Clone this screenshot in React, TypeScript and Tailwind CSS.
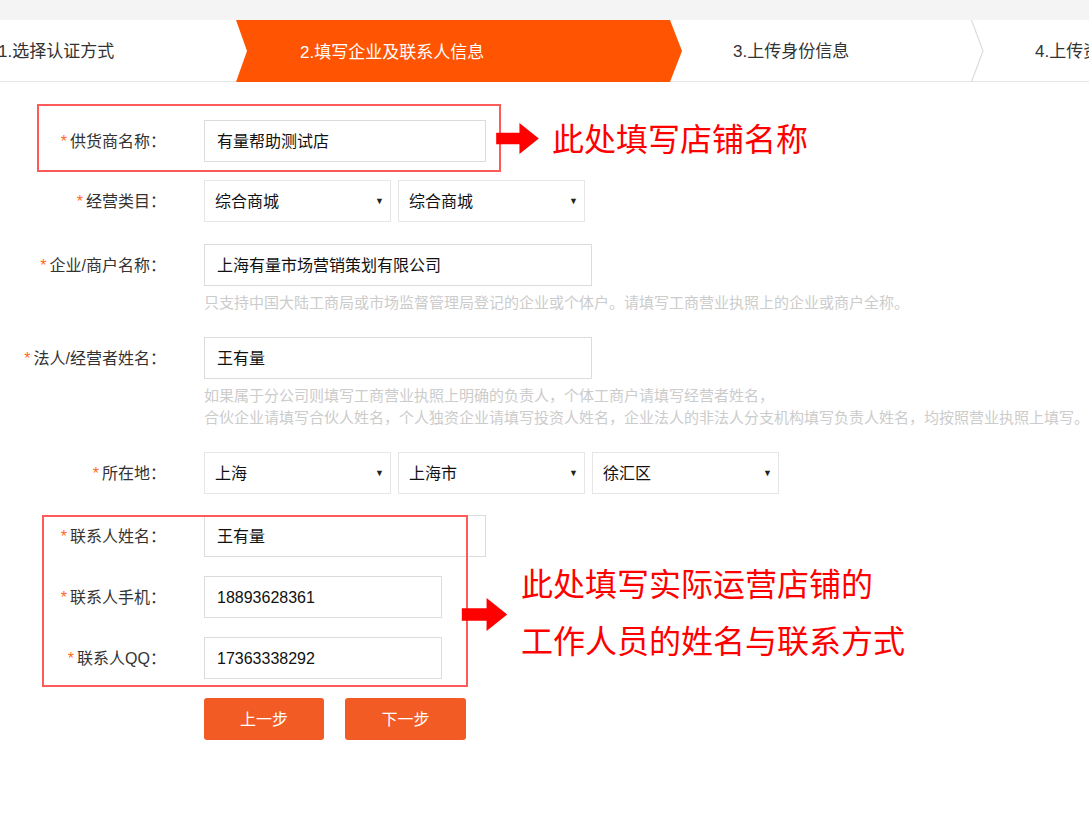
import React from 'react';

const Label: React.FC<{ text: string }> = ({ text }) => (
  <div className="w-[166px] h-[42px] shrink-0 flex items-center justify-end pt-[2px] text-[16px] text-[#333] whitespace-nowrap">
    <span className="text-[#ff6a1a] mr-[3px] text-[16px]">*</span>
    {text}：
  </div>
);

const Input: React.FC<{ value: string; w: string }> = ({ value, w }) => (
  <div className={`${w} h-[42px] border border-[#dcdcdc] bg-white flex items-center pl-[12px] pt-[2px] text-[16px] text-[#111]`}>
    {value}
  </div>
);

const Select: React.FC<{ value: string }> = ({ value }) => (
  <div className="w-[187px] h-[42px] border border-[#e6e6e6] bg-white flex items-center justify-between pl-[10px] pr-[6px] pt-[2px] text-[16px] text-[#111]">
    <span>{value}</span>
    <span className="text-[9px] text-[#222]">▼</span>
  </div>
);

const Arrow: React.FC<{ className: string }> = ({ className }) => (
  <svg className={className} viewBox="0 0 44 32" fill="#ff0000">
    <polygon points="0,10 24,10 24,0 44,16 24,32 24,22 0,22" />
  </svg>
);

export default function App() {
  return (
    <div className="relative w-[1089px] h-[815px] bg-white overflow-hidden font-['Liberation_Sans','Noto_Sans_CJK_SC',sans-serif]">
      <div className="h-[20px] bg-[#f4f4f4]" />

      {/* steps */}
      <div className="flex h-[62px] text-[17px] whitespace-nowrap">
        <div className="w-[236px] shrink-0 flex items-center pt-[3px] border-b border-[#e6e6e6] text-[#333]">
          <span className="-ml-[2px]">1.选择认证方式</span>
        </div>
        <div className="relative z-10 w-[446px] shrink-0 flex items-center pl-[64px] pt-[3px] bg-[#ff5503] text-white [clip-path:polygon(0_0,434px_0,446px_50%,434px_100%,0_100%,11px_50%)]">
          2.填写企业及联系人信息
        </div>
        <div className="relative -ml-[12px] w-[314px] shrink-0 flex items-center pl-[63px] pt-[3px] border-b border-[#e6e6e6] text-[#333]">
          3.上传身份信息
          <svg className="absolute right-0 top-0 w-[13px] h-[62px]" viewBox="0 0 13 62">
            <polyline points="0.5,0 12,31 0.5,62" fill="none" stroke="#dcdcdc" strokeWidth="1.2" />
          </svg>
        </div>
        <div className="flex-1 flex items-center pl-[51px] pt-[3px] border-b border-[#e6e6e6] text-[#333]">
          4.上传资质信息
        </div>
      </div>

      {/* form */}
      <div className="flex flex-col">
        <div className="flex mt-[38px]">
          <Label text="供货商名称" />
          <div className="ml-[38px]"><Input value="有量帮助测试店" w="w-[282px]" /></div>
        </div>

        <div className="flex mt-[18px]">
          <Label text="经营类目" />
          <div className="ml-[38px] flex gap-[7px]">
            <Select value="综合商城" />
            <Select value="综合商城" />
          </div>
        </div>

        <div className="flex mt-[22px]">
          <Label text="企业/商户名称" />
          <div className="ml-[38px]">
            <Input value="上海有量市场营销策划有限公司" w="w-[388px]" />
            <p className="mt-[6px] leading-[22px] text-[15px] text-[#cccccc] whitespace-nowrap">
              只支持中国大陆工商局或市场监督管理局登记的企业或个体户。请填写工商营业执照上的企业或商户全称。
            </p>
          </div>
        </div>

        <div className="flex mt-[23px]">
          <Label text="法人/经营者姓名" />
          <div className="ml-[38px]">
            <Input value="王有量" w="w-[388px]" />
            <p className="mt-[6px] leading-[22px] text-[15px] text-[#cccccc] whitespace-nowrap">
              如果属于分公司则填写工商营业执照上明确的负责人，个体工商户请填写经营者姓名，
              <br />
              合伙企业请填写合伙人姓名，个人独资企业请填写投资人姓名，企业法人的非法人分支机构填写负责人姓名，均按照营业执照上填写。
            </p>
          </div>
        </div>

        <div className="flex mt-[23px]">
          <Label text="所在地" />
          <div className="ml-[38px] flex gap-[7px]">
            <Select value="上海" />
            <Select value="上海市" />
            <Select value="徐汇区" />
          </div>
        </div>

        <div className="flex mt-[21px]">
          <Label text="联系人姓名" />
          <div className="ml-[38px]"><Input value="王有量" w="w-[282px]" /></div>
        </div>

        <div className="flex mt-[19px]">
          <Label text="联系人手机" />
          <div className="ml-[38px]"><Input value="18893628361" w="w-[238px]" /></div>
        </div>

        <div className="flex mt-[19px]">
          <Label text="联系人QQ" />
          <div className="ml-[38px]"><Input value="17363338292" w="w-[238px]" /></div>
        </div>

        <div className="flex mt-[19px] ml-[204px] gap-[21px]">
          <button className="w-[120px] h-[42px] rounded-[3px] bg-[#f25b24] text-white text-[16px] pt-[2px]">上一步</button>
          <button className="w-[121px] h-[42px] rounded-[3px] bg-[#f25b24] text-white text-[16px] pt-[2px]">下一步</button>
        </div>
      </div>

      {/* annotations */}
      <div className="absolute left-[37px] top-[104px] w-[464px] h-[68px] border-2 border-[#ff5a5a]" />
      <Arrow className="absolute left-[496px] top-[123px] w-[43px] h-[31px]" />
      <div className="absolute left-[552px] top-[119px] text-[32px] leading-[42px] text-[#ff0000] whitespace-nowrap">
        此处填写店铺名称
      </div>

      <div className="absolute left-[42px] top-[515px] w-[426px] h-[172px] border-2 border-[#ff5a5a]" />
      <Arrow className="absolute left-[460px] top-[598px] w-[49px] h-[33px]" />
      <div className="absolute left-[521px] top-[557px] text-[32px] leading-[57px] text-[#ff0000] whitespace-nowrap">
        此处填写实际运营店铺的
        <br />
        工作人员的姓名与联系方式
      </div>
    </div>
  );
}
